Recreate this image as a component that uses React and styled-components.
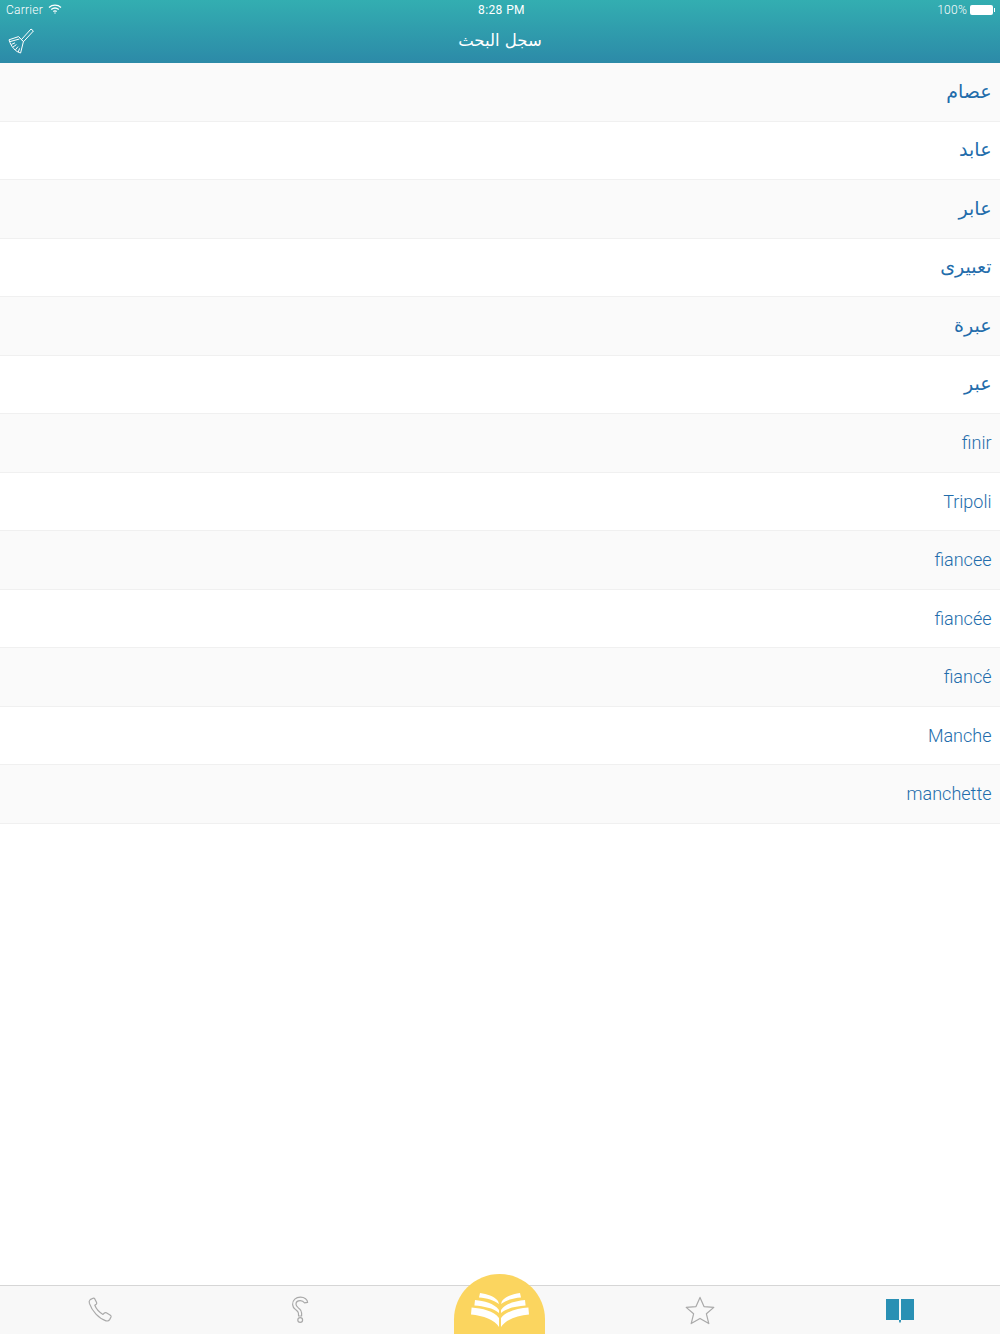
import React from 'react'
import styled, { createGlobalStyle } from 'styled-components'

const GlobalStyle = createGlobalStyle`
  html, body { margin: 0; padding: 0; background: #fff; }
  * { box-sizing: border-box; }
`

const words = [
  { text: 'عصام', arabic: true },
  { text: 'عابد', arabic: true },
  { text: 'عابر', arabic: true },
  { text: 'تعبيرى', arabic: true },
  { text: 'عبرة', arabic: true },
  { text: 'عبر', arabic: true },
  { text: 'finir' },
  { text: 'Tripoli' },
  { text: 'fiancee' },
  { text: 'fiancée' },
  { text: 'fiancé' },
  { text: 'Manche' },
  { text: 'manchette' },
]

const Broom = () => (
  <svg width="26" height="26" viewBox="0 0 26 26" fill="none" stroke="#fff" strokeWidth="1" strokeLinejoin="round">
    <path d="M23 1 L25.4 3 L15.6 13.6 L13.4 11.6 Z" />
    <path d="M1 11.8 L10.6 8.6 L15.4 13.6 L12.6 25 C8 24 3 19 1 11.8 Z" />
    <path d="M2 13.6 L11.4 11 M3.4 16.4 L7 14.8 M5 19 L8.4 16.6 M7.4 21.8 L10 18.6 M10.2 24 L11.6 20.4" />
  </svg>
)

const Wifi = () => (
  <svg width="14" height="10" viewBox="0 0 14 10" fill="none" stroke="#fff" strokeWidth="1.3">
    <path d="M1 3.4 C4.4 .4 9.6 .4 13 3.4" />
    <path d="M3.2 5.6 C5.4 3.7 8.6 3.7 10.8 5.6" />
    <path d="M5.3 7.6 C6.3 6.8 7.7 6.8 8.7 7.6" />
    <circle cx="7" cy="9" r=".7" fill="#fff" stroke="none" />
  </svg>
)

const Phone = () => (
  <svg width="26" height="26" viewBox="-1 0 26 26" fill="none" stroke="#a9a9a9" strokeWidth="1.2" strokeLinejoin="round">
    <path d="M2.2 2.6 L5 1.2 C5.8 .9 6.4 1.2 6.8 1.9 L8.6 5.4 C8.9 6.1 8.8 6.7 8.2 7.2 L6.8 8.3 C8.2 11.8 11.4 15.4 15 17.4 L16.4 16 C17 15.5 17.6 15.4 18.3 15.8 L22.4 18.2 C23.1 18.7 23.3 19.4 23 20 L21.6 22.6 C20.9 23.8 19.4 24.2 18 23.8 C10.8 21.6 4 14 1.4 6.4 C.9 4.8 1.2 3.4 2.2 2.6 Z" />
  </svg>
)

const Ear = () => (
  <svg width="18" height="28" viewBox="0 0 18 28" fill="none" stroke="#a9a9a9" strokeWidth="1.2" strokeLinejoin="round">
    <path d="M1.6 8.6 C1.4 4 5 1.2 9.4 1.2 C13.6 1.2 16.6 3.6 16.6 6.4 L13.4 6.8 C12.6 5.4 11 4.6 9.2 4.6 C6.8 4.6 5 6 5 8.2 C5 10.4 6.8 11.4 8.4 12.8 C9.8 14 10.6 15.4 10.6 17 L10.6 20 L7.6 20 L7.4 17 C7.2 15.6 6 14.8 4.6 13.6 C2.8 12.2 1.7 10.8 1.6 8.6 Z" />
    <circle cx="9.2" cy="24" r="2.4" />
  </svg>
)

const Star = () => (
  <svg width="30" height="29" viewBox="0 0 30 29" fill="none" stroke="#a9a9a9" strokeWidth="1.2" strokeLinejoin="round">
    <path d="M15 1.4 L19 10.6 L28.8 11.4 L21.4 17.8 L23.8 27.6 L15 22.4 L6.2 27.6 L8.6 17.8 L1.2 11.4 L11 10.6 Z" />
  </svg>
)

const BookOpen = () => (
  <svg width="28" height="25" viewBox="0 0 28 25" fill="#2a90b4">
    <path d="M0 1 L13 1 L13 22 L0 22 Z" />
    <path d="M15 1 L28 1 L28 22 L15 22 Z" />
    <path d="M13 22 L15 22 L14.8 24.4 L13.2 24.4 Z" />
  </svg>
)

const Pages = () => (
  <svg width="58" height="36" viewBox="0 0 58 36" fill="#fff">
    <path d="M9 1 C16 2 23 4 27 9 L28 12 C23 8 16 6 8 5.4 Z" />
    <path d="M49 1 C42 2 35 4 31 9 L30 12 C35 8 42 6 50 5.4 Z" />
    <path d="M4 8 C13 9 23 11 28 18 L28 21 C22 16 13 14.4 3.4 13.6 Z" />
    <path d="M54 8 C45 9 35 11 30 18 L30 21 C36 16 45 14.4 54.6 13.6 Z" />
    <path d="M.6 15.6 C11 16.4 23 19 28 26 L28 35 C24 28 12 23.4 0 22.4 Z" />
    <path d="M57.4 15.6 C47 16.4 35 19 30 26 L30 35 C34 28 46 23.4 58 22.4 Z" />
  </svg>
)

const App = () => (
  <Page>
    <GlobalStyle />
    <Header>
      <StatusBar>
        <Carrier>Carrier <Wifi /></Carrier>
        <Clock>8:28 PM</Clock>
        <BatteryWrap>
          100%
          <Battery />
        </BatteryWrap>
      </StatusBar>
      <NavBar>
        <ClearButton><Broom /></ClearButton>
        <Title>سجل البحث</Title>
      </NavBar>
    </Header>
    <List>
      {words.map((word, i) => (
        <Row key={word.text} $shaded={i % 2 === 0}>
          <Word $arabic={word.arabic}>{word.text}</Word>
        </Row>
      ))}
    </List>
    <TabBar>
      <Tab><Phone /></Tab>
      <Tab><Ear /></Tab>
      <Tab>
        <Dome><Pages /></Dome>
      </Tab>
      <Tab><Star /></Tab>
      <Tab><BookOpen /></Tab>
    </TabBar>
  </Page>
)

export default App

const Page = styled.div`
  width: 1000px;
  height: 1334px;
  display: flex;
  flex-direction: column;
  overflow: hidden;
  font-family: "Roboto", "DejaVu Sans", sans-serif;
`

const Header = styled.header`
  height: 63px;
  flex: none;
  color: #fff;
  background: linear-gradient(#33aeb1, #2c8aa8);
`

const StatusBar = styled.div`
  height: 20px;
  padding: 0 6px;
  display: grid;
  grid-template-columns: 1fr auto 1fr;
  align-items: center;
  font-size: 12px;
  letter-spacing: 0.25px;
`

const Carrier = styled.div`
  display: flex;
  align-items: center;
  gap: 5px;
  font-weight: 300;
  svg { margin-top: -2px; }
`

const Clock = styled.div`
  font-weight: 400;
  margin-left: 3px;
  letter-spacing: 0.4px;
`

const BatteryWrap = styled.div`
  display: flex;
  justify-content: flex-end;
  align-items: center;
  gap: 3px;
  font-weight: 300;
`

const Battery = styled.span`
  width: 23px;
  height: 10px;
  margin-right: 1px;
  border-radius: 2px;
  background: #fff;
  position: relative;
  &::after {
    content: "";
    position: absolute;
    right: -2px;
    top: 3px;
    width: 1px;
    height: 4px;
    background: #fff;
  }
`

const NavBar = styled.div`
  height: 43px;
  padding: 0 8px;
  display: grid;
  grid-template-columns: 1fr auto 1fr;
  align-items: center;
`

const ClearButton = styled.div`
  display: flex;
  align-items: center;
  margin-top: -1px;
`

const Title = styled.div`
  font-family: "DejaVu Sans", sans-serif;
  font-size: 16.5px;
  font-weight: 400;
  margin-top: -2px;
`

const List = styled.main`
  flex: 1;
  background: #fff;
`

const Row = styled.div`
  height: 58.5px;
  padding: 0 8.5px;
  display: flex;
  justify-content: flex-end;
  align-items: center;
  background: ${(p) => (p.$shaded ? '#fafafa' : '#fff')};
  border-bottom: 1px solid #f0f0f0;
`

const Word = styled.span`
  font-family: ${(p) => (p.$arabic ? '"DejaVu Sans"' : '"Roboto"')}, sans-serif;
  font-weight: ${(p) => (p.$arabic ? 400 : 300)};
  font-size: ${(p) => (p.$arabic ? 19 : 18)}px;
  margin-top: ${(p) => (p.$arabic ? -2 : 0)}px;
  color: #226cab;
`

const TabBar = styled.nav`
  height: 49px;
  flex: none;
  display: grid;
  grid-template-columns: repeat(5, 1fr);
  background: #f8f8f8;
  border-top: 1px solid #d6d6d6;
`

const Tab = styled.div`
  position: relative;
  display: flex;
  align-items: center;
  justify-content: center;
`

const Dome = styled.div`
  position: absolute;
  left: 54px;
  top: -12px;
  width: 91px;
  height: 62px;
  padding-top: 18px;
  display: flex;
  justify-content: center;
  align-items: flex-start;
  background: #fbd55f;
  border-radius: 46px 46px 0 0;
`
